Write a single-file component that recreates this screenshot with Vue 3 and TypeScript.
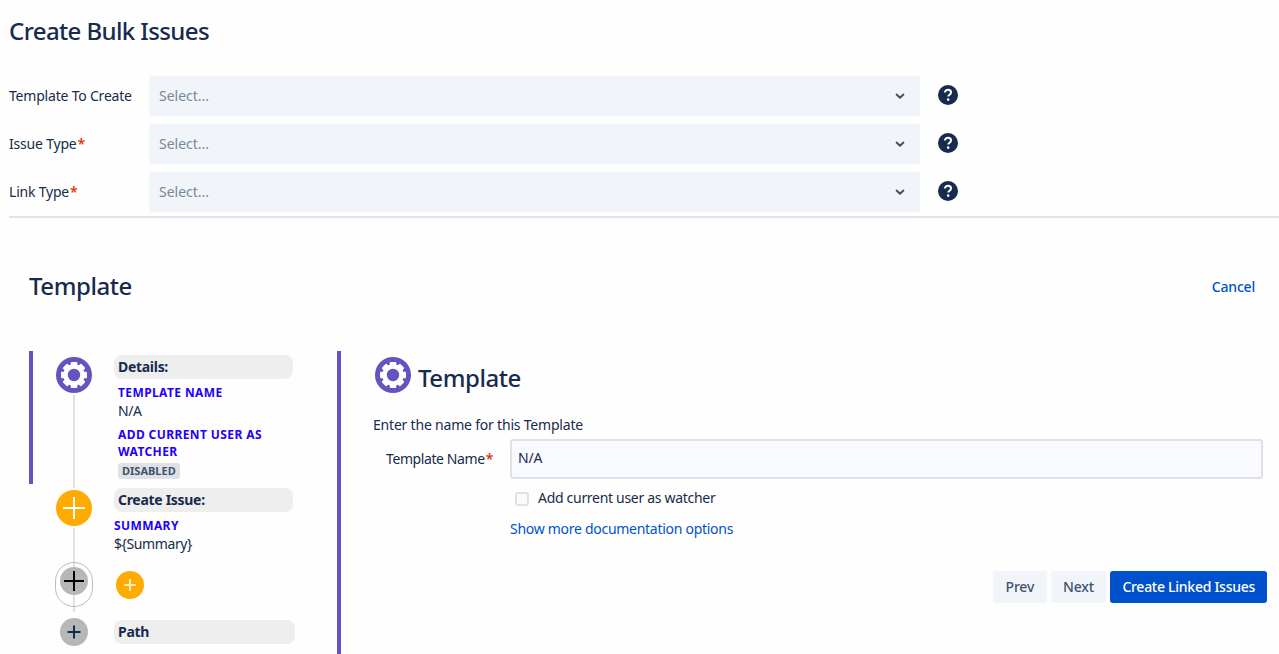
<script setup lang="ts">
const selects = [
  { label: 'Template To Create', required: false },
  { label: 'Issue Type', required: true },
  { label: 'Link Type', required: true },
]

function gear(): string {
  const teeth = 8
  const pts: string[] = []
  for (let i = 0; i < teeth; i++) {
    const a = (i * 2 * Math.PI) / teeth - Math.PI / 2
    const w = 0.2
    const p = (r: number, t: number) =>
      `${(18 + r * Math.cos(a + t)).toFixed(2)} ${(18 + r * Math.sin(a + t)).toFixed(2)}`
    pts.push(p(10, -w - 0.06), p(12.4, -w), p(12.4, w), p(10, w + 0.06))
  }
  return 'M' + pts.join('L') + 'Z'
}
const gearPath = gear()
</script>

<template>
  <div class="page">
    <h1 class="title">Create Bulk Issues</h1>
    <div class="fields">
      <div v-for="s in selects" :key="s.label" class="field">
        <label class="field-label">{{ s.label }}<span v-if="s.required" class="req">*</span></label>
        <div class="select">
          <span class="placeholder">Select...</span>
          <svg class="chev" width="24" height="24" viewBox="0 0 24 24">
            <path d="M8.6 10.500 12 13.800l3.400-3.300" fill="none" stroke="#42526e" stroke-width="2" stroke-linecap="round" stroke-linejoin="round" />
          </svg>
        </div>
        <svg class="help" width="20" height="20" viewBox="0 0 20 20">
          <circle cx="10" cy="10" r="10" fill="#172b4d" />
          <path d="M7 7.6C7 5.9 8.3 4.800 10 4.800s3 1.100 3 2.700c0 1.300-.8 1.900-1.600 2.400-.7.4-1.100.8-1.100 1.600" fill="none" stroke="#fff" stroke-width="2" />
          <circle cx="10.200" cy="14.600" r="1.300" fill="#fff" />
        </svg>
      </div>
    </div>
    <div class="rule"></div>

    <div class="head">
      <h2 class="head-title">Template</h2>
      <a class="cancel">Cancel</a>
    </div>

    <div class="workspace">
      <aside class="timeline">
        <section class="step step-active">
          <div class="rail">
            <svg class="node" width="36" height="36" viewBox="0 0 36 36">
              <circle cx="18" cy="18" r="18" fill="#6554c0" />
              <path :d="gearPath" fill="#fff" stroke="#fff" stroke-width="1.6" stroke-linejoin="round" />
              <circle cx="18" cy="18" r="6.200" fill="#6554c0" />
            </svg>
            <div class="line line-first"></div>
          </div>
          <div class="body">
            <div class="pill">Details:</div>
            <div class="props">
              <div class="prop-name">TEMPLATE NAME</div>
              <div class="prop-value">N/A</div>
              <div class="prop-name prop-gap">ADD CURRENT USER AS WATCHER</div>
              <span class="badge">DISABLED</span>
            </div>
          </div>
        </section>

        <section class="step step-issue">
          <div class="rail">
            <svg class="node" width="36" height="36" viewBox="0 0 36 36">
              <circle cx="18" cy="18" r="18" fill="#ffab00" />
              <path d="M18 7v22M7 18h22" stroke="#fff" stroke-width="2" />
            </svg>
            <div class="line"></div>
          </div>
          <div class="body">
            <div class="pill">Create Issue:</div>
            <div class="props props-flush">
              <div class="prop-name">SUMMARY</div>
              <div class="prop-value">${Summary}</div>
            </div>
          </div>
        </section>

        <section class="add-row">
          <div class="rail rail-add">
            <div class="line line-behind"></div>
            <div class="halo"></div>
            <svg class="node-add" width="28" height="28" viewBox="0 0 28 28">
              <circle cx="14" cy="14" r="14" fill="#b6b8b5" />
              <path d="M14 4v20M4 14h20" stroke="#000" stroke-width="2" />
            </svg>
          </div>
          <svg class="add-btn" width="28" height="28" viewBox="0 0 28 28">
            <circle cx="14" cy="14" r="14" fill="#ffab00" />
            <path d="M14 8v12M8 14h12" stroke="#ffe9b8" stroke-width="2" />
          </svg>
        </section>

        <section class="path-row">
          <svg class="path-node" width="28" height="28" viewBox="0 0 28 28">
            <circle cx="14" cy="14" r="14" fill="#b6b8b5" />
            <path d="M14 7.500v13M7.500 14h13" stroke="#172b4d" stroke-width="2" />
          </svg>
          <div class="pill pill-path">Path</div>
        </section>
      </aside>

      <main class="panel">
        <div class="panel-head">
          <svg width="36" height="36" viewBox="0 0 36 36">
            <circle cx="18" cy="18" r="18" fill="#6554c0" />
            <path :d="gearPath" fill="#fff" stroke="#fff" stroke-width="1.6" stroke-linejoin="round" />
            <circle cx="18" cy="18" r="6.200" fill="#6554c0" />
          </svg>
          <h3 class="panel-title">Template</h3>
        </div>
        <p class="intro">Enter the name for this Template</p>
        <div class="form-row">
          <label class="form-label">Template Name<span class="req">*</span></label>
          <div class="input">N/A</div>
        </div>
        <div class="check-row">
          <span class="check"></span>
          <span class="check-text">Add current user as watcher</span>
        </div>
        <a class="more">Show more documentation options</a>
        <div class="actions">
          <button class="btn">Prev</button>
          <button class="btn">Next</button>
          <button class="btn btn-primary">Create Linked Issues</button>
        </div>
      </main>
    </div>
  </div>
</template>

<style>
html, body { margin: 0; background: #fefefe; }
</style>

<style scoped>
.page {
  height: 654px;
  overflow: hidden;
  font-family: "Noto Sans", "Open Sans", sans-serif;
  font-size: 14px;
  letter-spacing: -0.2px;
  color: #172b4d;
  display: flex;
  flex-direction: column;
}
.title {
  margin: 0;
  padding: 15px 0 0 9px;
  font-size: 24px;
  line-height: 32px;
  font-weight: 500;
  letter-spacing: -0.6px;
  height: 61px;
  box-sizing: border-box;
}
.fields {
  margin-top: 15px;
  padding-left: 9px;
  display: flex;
  flex-direction: column;
  gap: 8px;
}
.field { display: flex; align-items: center; height: 40px; }
.field-label { width: 140px; flex: none; margin-bottom: 2px; }
.req { color: #de350b; margin-left: 1px; font-weight: 600; }
.select {
  width: 771px;
  height: 40px;
  background: #f1f5f9;
  border-radius: 3px;
  display: flex;
  align-items: center;
  justify-content: space-between;
  padding: 0 8px 0 10px;
  box-sizing: border-box;
}
.placeholder { color: #7a869a; margin-bottom: 2px; letter-spacing: 0; }
.chev { flex: none; }
.help { margin: -2px 0 0 18px; flex: none; }
.rule {
  height: 2px;
  margin: 4px 0 0 9px;
  background: #dfe4e6;
}
.head {
  display: flex;
  justify-content: space-between;
  align-items: center;
  height: 32px;
  margin-top: 52px;
  padding: 0 24px 0 29px;
}
.head-title { margin: 0; font-size: 24px; font-weight: 500; line-height: 32px; letter-spacing: -0.45px; }
.cancel { color: #0052cc; font-weight: 500; }
.workspace {
  flex: 1;
  margin-top: 49px;
  padding-left: 29px;
  display: flex;
  min-height: 0;
}
.timeline { width: 308px; flex: none; display: flex; flex-direction: column; }
.step { display: flex; padding-left: 27px; gap: 22px; }
.step-active {
  height: 133px;
  box-sizing: border-box;
  border-left: 4px solid #6554c0;
  padding: 4px 0 0 23px;
}
.step-issue { height: 78px; box-sizing: border-box; padding-top: 4px; }
.rail {
  width: 36px;
  flex: none;
  display: flex;
  flex-direction: column;
  align-items: center;
}
.node { flex: none; margin-top: 2px; }
.line { width: 2px; flex: 1; background: #dfe1e6; margin-top: 2px; }
.line-first { margin-bottom: -4px; }
.body { width: 179px; flex: none; }
.pill {
  height: 24px;
  line-height: 24px;
  background: #eeeeee;
  border-radius: 8px;
  padding-left: 4px;
  font-weight: 700;
  letter-spacing: -0.3px;
}
.props { padding: 5px 0 0 4px; }
.props-flush { padding-left: 0; }
.prop-name {
  color: #2200ff;
  font-size: 12px;
  font-weight: 700;
  line-height: 17px;
  letter-spacing: 0.4px;
}
.prop-value { line-height: 20px; margin-top: 0; letter-spacing: -0.4px; }
.prop-gap { margin-top: 5px; }
.badge {
  display: inline-block;
  background: #dfe1e6;
  color: #42526e;
  font-size: 11px;
  font-weight: 700;
  line-height: 16px;
  letter-spacing: 0;
  padding: 0 4px;
  border-radius: 3px;
  margin-top: 3px;
  vertical-align: top;
}
.add-row {
  height: 50px;
  padding-left: 27px;
  display: flex;
  gap: 24px;
  flex: none;
}
.rail-add { position: relative; height: 50px; }
.line-behind { position: absolute; top: 0; bottom: 0; left: 17px; margin: 0; }
.halo {
  position: absolute;
  left: -1px;
  top: 0;
  width: 38px;
  height: 45px;
  box-sizing: border-box;
  border: 1px solid #bdbdbd;
  border-radius: 19px;
}
.node-add { position: relative; margin-top: 5px; }
.add-btn { margin-top: 9px; flex: none; }
.path-row {
  margin-top: 6px;
  padding-left: 31px;
  display: flex;
  align-items: center;
  gap: 26px;
  height: 28px;
  flex: none;
}
.path-node { flex: none; }
.pill-path { width: 181px; box-sizing: border-box; }
.panel {
  flex: 1;
  border-left: 4px solid #6554c0;
  padding: 6px 16px 0 32px;
  box-sizing: border-box;
  min-width: 0;
  display: flex;
  flex-direction: column;
  align-items: flex-start;
}
.panel-head { display: flex; align-items: center; gap: 7px; margin-left: 2px; }
.panel-title {
  margin: 0;
  font-size: 24px;
  font-weight: 500;
  line-height: 32px;
  height: 36px;
  box-sizing: border-box;
  padding-top: 5px;
  letter-spacing: -0.45px;
}
.intro { margin: 22px 0 0; line-height: 20px; }
.form-row { display: flex; align-items: center; width: 100%; margin-top: 4px; }
.form-label { width: 137px; flex: none; text-align: right; padding-right: 17px; box-sizing: border-box; margin-bottom: 2px; letter-spacing: -0.4px; }
.input {
  flex: 1;
  height: 40px;
  box-sizing: border-box;
  background: #f8faff;
  border: 2px solid #dfe1e6;
  border-radius: 3px;
  padding: 0 6px;
  line-height: 34px;
}
.check-row {
  display: flex;
  align-items: center;
  gap: 9px;
  margin: 9px 0 0 142px;
  line-height: 20px;
}
.check-text { margin-bottom: 1px; letter-spacing: -0.3px; }
.check {
  width: 14px;
  height: 14px;
  box-sizing: border-box;
  border: 2px solid #dfe1e6;
  background: #fafbfc;
  border-radius: 3px;
}
.more { color: #0052cc; margin: 10px 0 0 137px; line-height: 20px; letter-spacing: -0.28px; }
.actions {
  align-self: flex-end;
  display: flex;
  gap: 4px;
  margin-top: 32px;
  margin-right: -4px;
}
.btn {
  height: 32px;
  border: none;
  border-radius: 3px;
  background: #f1f5f9;
  color: #42526e;
  font: inherit;
  letter-spacing: inherit;
  font-weight: 500;
  padding: 0 12.5px 2px;
}
.btn-primary { background: #0052cc; color: #fff; padding: 0 12px 2px; letter-spacing: -0.27px; }
</style>
